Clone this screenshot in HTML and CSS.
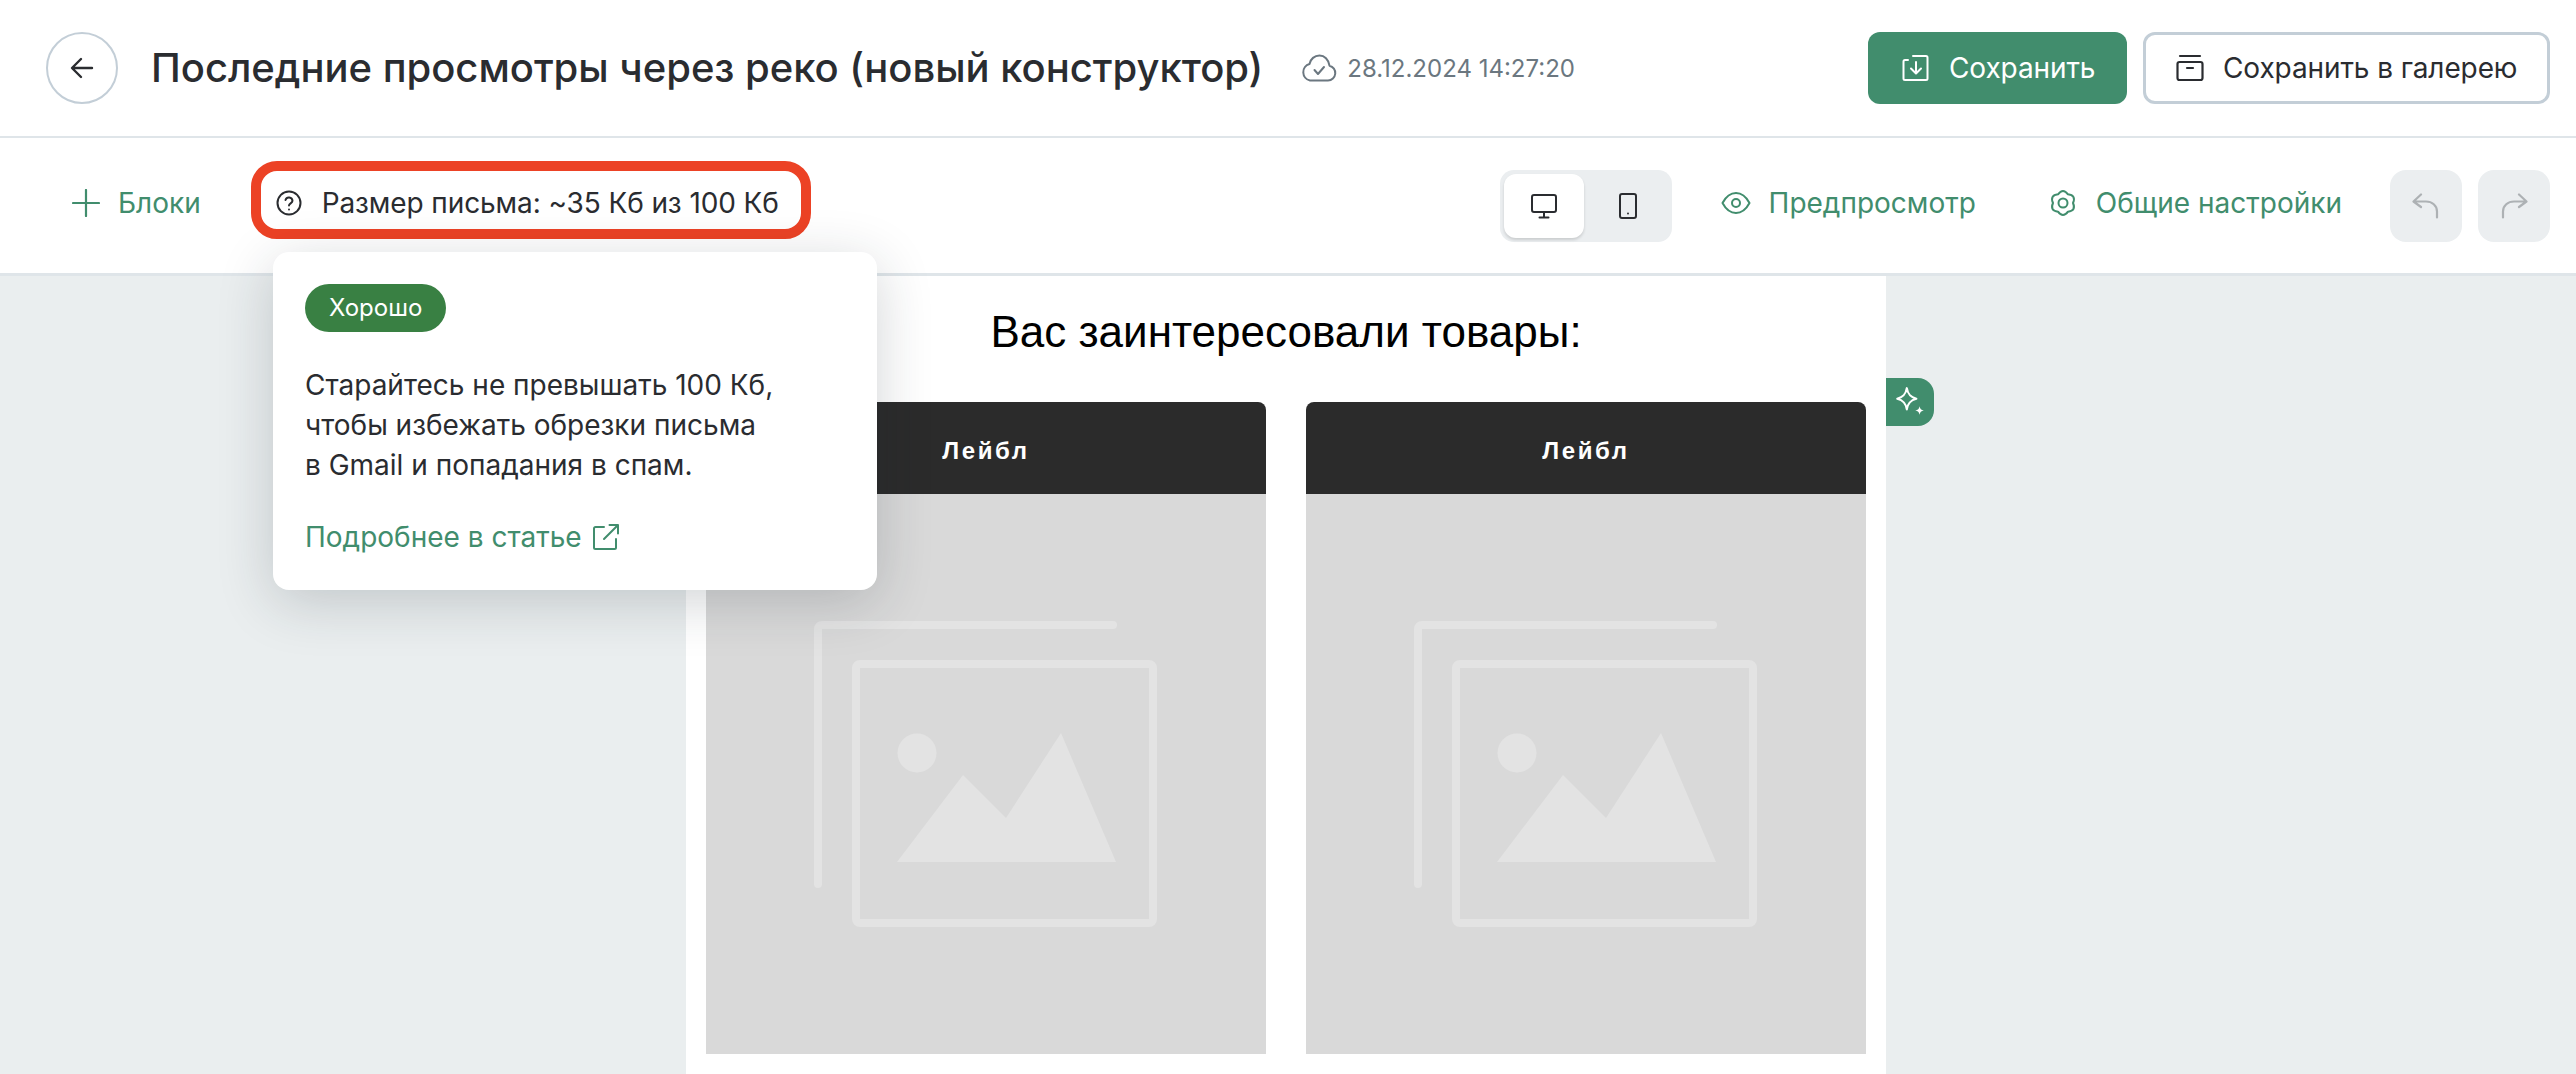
FILE: index.html
```html
<!DOCTYPE html>
<html lang="ru">
<head>
    <meta charset="UTF-8">
    <title>Последние просмотры через реко (новый конструктор)</title>
    <link rel="stylesheet" href="styles.css">
</head>
<body>
    <!-- Шапка -->
    <header class="topbar">
        <button class="back-button">
            <svg width="28" height="28" viewBox="0 0 28 28" fill="none" stroke="#2a2c30" stroke-width="2.4" stroke-linecap="round" stroke-linejoin="round"><path d="M24 14H5M13 5l-9 9 9 9"/></svg>
        </button>
        <h1 class="page-title">Последние просмотры через реко (новый конструктор)</h1>
        <div class="save-status">
            <svg width="36" height="28" viewBox="0 0 36 28" fill="none" stroke="#6b7780" stroke-width="2" stroke-linecap="round" stroke-linejoin="round"><path d="M9 26.500h18a7.500 7.500 0 0 0 1.500-14.800C27.500 5.500 23.500 1.500 18.500 1.500c-5 0-9 3.500-10 8.500A8.500 8.500 0 0 0 9 26.500z"/><path d="M13.500 16l3.500 4 6-7"/></svg>
            <span>28.12.2024 14:27:20</span>
        </div>
        <div class="topbar-actions">
            <button class="button button-primary">
                <svg width="28" height="28" viewBox="0 0 28 28" fill="none" stroke="#fff" stroke-width="2" stroke-linecap="round" stroke-linejoin="round"><path d="M6 6H3a1.500 1.500 0 0 0-1.500 1.500v17A1.500 1.500 0 0 0 3 26h21a1.500 1.500 0 0 0 1.500-1.500v-21A1.500 1.500 0 0 0 24 2H11"/><path d="M14 8v11M9 14.500l5 5 5-5"/></svg>
                Сохранить
            </button>
            <button class="button button-outline">
                <svg width="28" height="28" viewBox="0 0 28 28" fill="none" stroke="#2a2c30" stroke-width="2.200" stroke-linecap="round" stroke-linejoin="round"><path d="M4 2h20"/><rect x="1.500" y="8" width="25" height="18" rx="2"/><path d="M11 14h6"/></svg>
                Сохранить в галерею
            </button>
        </div>
    </header>

    <!-- Панель инструментов -->
    <nav class="toolbar">
        <a class="link-item blocks-link">
            <svg width="28" height="28" viewBox="0 0 28 28" fill="none" stroke="#418d6d" stroke-width="2.200" stroke-linecap="round"><path d="M14 1v26M1 14h26"/></svg>
            Блоки
        </a>
        <div class="size-info">
            <svg width="26" height="26" viewBox="0 0 26 26" fill="none" stroke="#2a2c30" stroke-width="2" stroke-linecap="round" stroke-linejoin="round"><circle cx="13" cy="13" r="11.500"/><path d="M9.500 10a3.600 3.600 0 0 1 7 .8c0 2.400-3.500 2.700-3.500 4.700"/><path d="M13 19.500v.1"/></svg>
            <span>Размер письма: ~35 Кб из 100 Кб</span>
        </div>
        <div class="toolbar-right">
            <div class="device-switch">
                <button class="device-button device-button-active">
                    <svg width="28" height="26" viewBox="0 0 28 26" fill="none" stroke="#2a2c30" stroke-width="2" stroke-linecap="round" stroke-linejoin="round"><rect x="2" y="2" width="24" height="17" rx="2"/><path d="M14 19v5M9.500 24.500h9"/></svg>
                </button>
                <button class="device-button">
                    <svg width="20" height="28" viewBox="0 0 20 28" fill="none" stroke="#2a2c30" stroke-width="2" stroke-linecap="round" stroke-linejoin="round"><rect x="2" y="2" width="16" height="24" rx="2"/><path d="M10 21.500v.1"/></svg>
                </button>
            </div>
            <a class="link-item preview-link">
                <svg width="30" height="24" viewBox="0 0 30 24" fill="none" stroke="#418d6d" stroke-width="2" stroke-linejoin="round"><path d="M1.500 12C5 5.500 9.500 2 15 2s10 3.500 13.500 10C25 18.500 20.500 22 15 22S5 18.500 1.500 12z"/><circle cx="15" cy="12" r="4"/></svg>
                Предпросмотр
            </a>
            <a class="link-item settings-link">
                <svg width="26" height="28" viewBox="0 0 26 28" fill="none" stroke="#418d6d" stroke-width="2" stroke-linejoin="round"><path d="M8 5.340Q13-1.500 18 5.340Q26.400 6.250 23 14Q26.400 21.750 18 22.660Q13 29.500 8 22.660Q-.4 21.750 3 14Q-.4 6.250 8 5.340z"/><circle cx="13" cy="14" r="4.500"/></svg>
                Общие настройки
            </a>
            <div class="history-buttons">
                <button class="history-button">
                    <svg width="28" height="26" viewBox="0 0 28 26" fill="none" stroke="#adb1b4" stroke-width="2.200" stroke-linecap="round" stroke-linejoin="round"><path d="M9 1.500L1.500 8.500 9 14M2 8.500h12c6 0 11 4 11 10v6"/></svg>
                </button>
                <button class="history-button">
                    <svg width="28" height="26" viewBox="0 0 28 26" fill="none" stroke="#adb1b4" stroke-width="2.200" stroke-linecap="round" stroke-linejoin="round"><path d="M19 1.500l7.500 7L19 14M26 8.500H14c-6 0-11 4-11 10v6"/></svg>
                </button>
            </div>
        </div>

        <!-- Подсказка -->
        <div class="size-popup">
            <span class="status-badge">Хорошо</span>
            <p class="popup-text">Старайтесь не превышать 100 Кб,<br>чтобы избежать обрезки письма<br>в Gmail и попадания в спам.</p>
            <a class="popup-link">
                Подробнее в статье
                <svg width="28" height="28" viewBox="0 0 28 28" fill="none" stroke="#418d6d" stroke-width="2" stroke-linecap="round" stroke-linejoin="round"><path d="M12 4H3.500A1.500 1.500 0 0 0 2 5.500v19A1.500 1.500 0 0 0 3.500 26h19a1.500 1.500 0 0 0 1.500-1.500V16"/><path d="M12 16L26 2M17.500 2H26v8.500"/></svg>
            </a>
        </div>
    </nav>

    <!-- Холст письма -->
    <main class="canvas">
        <section class="email">
            <h2 class="email-title">Вас заинтересовали товары:</h2>
            <div class="product-grid">
                <article class="product-card">
                    <div class="product-label">Лейбл</div>
                    <div class="product-image">
                        <svg class="placeholder" width="344" height="306" viewBox="0 0 344 306"><path d="M4 263V8a4 4 0 0 1 4-4h291" fill="none" stroke="#e3e3e3" stroke-width="8" stroke-linecap="round"/><rect x="42" y="43" width="297" height="259" rx="4" fill="none" stroke="#e3e3e3" stroke-width="8"/><circle cx="103" cy="132" r="19.500" fill="#e3e3e3"/><path d="M83 241L149 154 192 197 247 112 302 241z" fill="#e3e3e3"/></svg>
                    </div>
                </article>
                <article class="product-card">
                    <div class="product-label">Лейбл</div>
                    <div class="product-image">
                        <svg class="placeholder" width="344" height="306" viewBox="0 0 344 306"><path d="M4 263V8a4 4 0 0 1 4-4h291" fill="none" stroke="#e3e3e3" stroke-width="8" stroke-linecap="round"/><rect x="42" y="43" width="297" height="259" rx="4" fill="none" stroke="#e3e3e3" stroke-width="8"/><circle cx="103" cy="132" r="19.500" fill="#e3e3e3"/><path d="M83 241L149 154 192 197 247 112 302 241z" fill="#e3e3e3"/></svg>
                    </div>
                </article>
            </div>
            <button class="ai-tab">
                <svg width="34" height="34" viewBox="0 0 32 32" fill="#fff"><path d="M13 3c1 6 3.500 8.500 9 10-5.500 1.500-8 4-9 10-1-6-3.500-8.500-9-10 5.500-1.500 8-4 9-10z" fill="none" stroke="#fff" stroke-width="2" stroke-linejoin="round"/><path d="M25 20c.5 2.500 1.500 3.500 4 4-2.500.5-3.500 1.500-4 4-.5-2.500-1.500-3.500-4-4 2.500-.5 3.500-1.500 4-4z"/></svg>
            </button>
        </section>
    </main>
</body>
</html>
```

FILE: styles.css
```css
* {
    margin: 0;
    padding: 0;
    box-sizing: border-box;
}

html,
body {
    height: 100%;
    overflow: hidden;
}

body {
    display: flex;
    flex-direction: column;
    font-family: 'Inter', sans-serif;
    color: #2a2c30;
    background: #fff;
}

button {
    font-family: inherit;
    border: none;
    background: none;
    cursor: pointer;
}

svg {
    display: block;
    flex-shrink: 0;
}

/* шапка */
.topbar {
    height: 138px;
    flex-shrink: 0;
    display: flex;
    align-items: center;
    padding: 0 26px 0 46px;
    border-bottom: 2px solid #dfe5e9;
}

.back-button {
    width: 72px;
    height: 72px;
    border: 2px solid #c3ced7;
    border-radius: 50%;
    display: flex;
    align-items: center;
    justify-content: center;
    margin-right: 33px;
}

.page-title {
    font-size: 40px;
    font-weight: 500;
    line-height: 72px;
    letter-spacing: -0.02px;
    white-space: nowrap;
}

.save-status {
    display: flex;
    align-items: center;
    gap: 10px;
    margin-left: 38px;
    font-size: 24px;
    color: #6b7780;
}

.topbar-actions {
    display: flex;
    gap: 16px;
    margin-left: auto;
}

.button {
    height: 72px;
    display: flex;
    align-items: center;
    gap: 19px;
    font-size: 28px;
    letter-spacing: -0.1px;
    border-radius: 12px;
    white-space: nowrap;
}

.button-primary {
    width: 259px;
    padding-left: 34px;
    background: #418d6d;
    color: #fff;
}

.button-outline {
    width: 407px;
    padding-left: 30px;
    border: 3px solid #c3ced7;
    color: #2a2c30;
}

/* панель инструментов */
.toolbar {
    position: relative;
    height: 138px;
    flex-shrink: 0;
    display: flex;
    align-items: center;
    padding: 0 26px 0 72px;
    border-bottom: 3px solid #dfe5e9;
}

.link-item {
    display: flex;
    align-items: center;
    font-size: 28px;
    color: #418d6d;
    white-space: nowrap;
    padding-bottom: 6px;
}

.blocks-link {
    gap: 18px;
    margin-right: 50px;
}

.size-info {
    width: 560px;
    height: 78px;
    display: flex;
    align-items: center;
    gap: 20px;
    padding: 5px 0 0 15px;
    border: 10px solid #ec4225;
    border-radius: 26px;
    font-size: 28px;
    letter-spacing: -0.1px;
    white-space: nowrap;
    margin-bottom: 11px;
}

.toolbar-right {
    display: flex;
    align-items: center;
    margin-left: auto;
}

.device-switch {
    display: flex;
    width: 172px;
    height: 72px;
    padding: 4px;
    background: #ebeef0;
    border-radius: 14px;
    margin-right: 49px;
}

.device-button {
    width: 80px;
    height: 64px;
    display: flex;
    align-items: center;
    justify-content: center;
    border-radius: 12px;
}

.device-button-active {
    background: #fff;
    box-shadow: 0 2px 3px rgba(0, 0, 0, 0.14);
}

.device-button + .device-button {
    margin-left: 4px;
}

.preview-link {
    gap: 18px;
    margin-right: 74px;
}

.settings-link {
    gap: 20px;
    margin-right: 48px;
}

.history-buttons {
    display: flex;
    gap: 16px;
}

.history-button {
    width: 72px;
    height: 72px;
    display: flex;
    align-items: center;
    justify-content: center;
    background: #ebeef0;
    border-radius: 16px;
}

/* подсказка */
.size-popup {
    position: absolute;
    top: 114px;
    left: 273px;
    z-index: 10;
    width: 604px;
    height: 338px;
    padding: 32px;
    background: #fff;
    border-radius: 16px;
    box-shadow: 0 12px 56px rgba(30, 40, 50, 0.2);
}

.status-badge {
    display: inline-block;
    height: 48px;
    padding: 0 24px;
    line-height: 47px;
    font-size: 24px;
    color: #fff;
    background: #398043;
    border-radius: 24px;
}

.popup-text {
    margin-top: 33px;
    font-size: 28px;
    line-height: 40px;
}

.popup-link {
    display: flex;
    align-items: center;
    gap: 10px;
    margin-top: 32px;
    font-size: 28px;
    line-height: 40px;
    color: #418d6d;
}

/* холст письма */
.canvas {
    flex: 1;
    min-height: 0;
    display: flex;
    justify-content: center;
    background: #eaeeef;
    padding-right: 4px;
}

.email {
    position: relative;
    width: 1200px;
    padding: 0 20px;
    background: #fff;
    font-family: 'Liberation Sans', Arial, sans-serif;
}

.email-title {
    height: 126px;
    padding-top: 30px;
    font-size: 44px;
    font-weight: 400;
    line-height: 52px;
    text-align: center;
    color: #000;
}

.product-grid {
    display: grid;
    grid-template-columns: 560px 560px;
    gap: 40px;
}

.product-label {
    height: 92px;
    padding-top: 6px;
    display: flex;
    align-items: center;
    justify-content: center;
    font-size: 24px;
    font-weight: 700;
    letter-spacing: 2.600px;
    color: #fff;
    background: #2b2b2b;
    border-radius: 8px 8px 0 0;
}

.product-image {
    height: 560px;
    display: flex;
    align-items: center;
    justify-content: center;
    background: #d9d9d9;
}

.ai-tab {
    position: absolute;
    top: 102px;
    left: 100%;
    width: 48px;
    height: 48px;
    display: flex;
    align-items: center;
    justify-content: center;
    background: #418d6d;
    border-radius: 0 16px 16px 0;
}
```
